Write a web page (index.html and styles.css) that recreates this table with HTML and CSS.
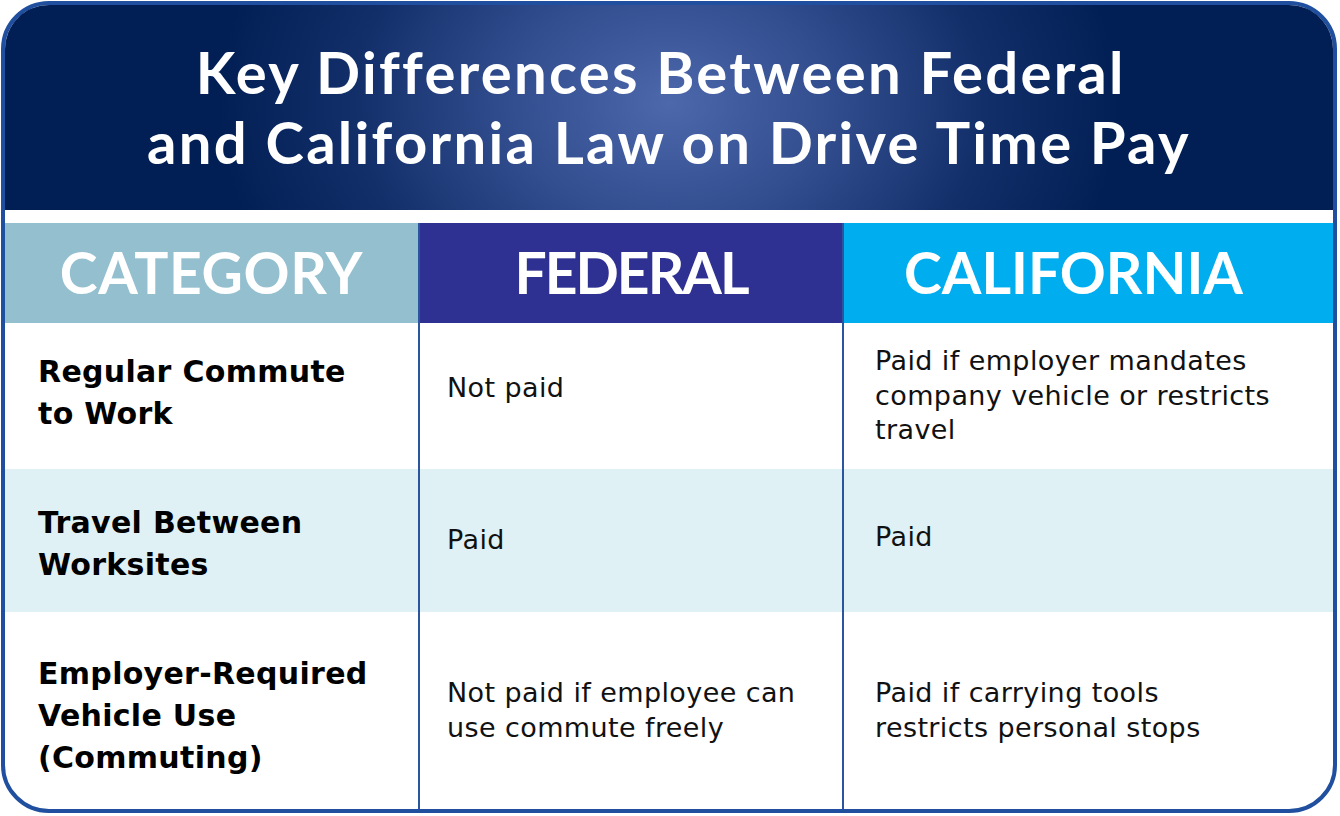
FILE: index.html
```html
<!DOCTYPE html>
<html lang="en">
<head>
<meta charset="utf-8">
<title>Key Differences Between Federal and California Law on Drive Time Pay</title>
<link rel="stylesheet" href="styles.css">
</head>
<body>
<div class="card">
  <header class="hero">
    <h1 class="title">Key Differences Between Federal&nbsp;<br>and California Law on Drive Time Pay</h1>
  </header>
  <div class="grid">
    <div class="cell head head-cat">CATEGORY</div>
    <div class="cell head head-fed">FEDERAL</div>
    <div class="cell head head-ca">CALIFORNIA</div>

    <div class="cell cat lift">Regular Commute<br>to Work</div>
    <div class="cell fed lift-more">Not paid</div>
    <div class="cell ca">Paid if employer mandates<br>company vehicle or restricts<br>travel</div>

    <div class="cell cat alt drop">Travel Between<br>Worksites</div>
    <div class="cell fed alt">Paid</div>
    <div class="cell ca alt lift">Paid</div>

    <div class="cell cat drop-more">Employer-Required<br>Vehicle Use<br>(Commuting)</div>
    <div class="cell fed">Not paid if employee can<br>use commute freely</div>
    <div class="cell ca">Paid if carrying tools<br>restricts personal stops</div>
  </div>
</div>
</body>
</html>
```
FILE: styles.css
```css
* { box-sizing: border-box; }

html, body {
  margin: 0;
  padding: 0;
  background: #ffffff;
}

.card {
  margin: 1px 0 0 1px;
  width: 1336px;
  height: 812px;
  border: 4px solid #1f4f9e;
  border-radius: 48px;
  overflow: hidden;
  background: #ffffff;
  display: flex;
  flex-direction: column;
}

.hero {
  height: 205px;
  flex: none;
  display: flex;
  align-items: center;
  justify-content: center;
  padding-bottom: 2px;
  background: radial-gradient(ellipse 450px 340px at 50% 48%, #4d68ab 0%, #324e8f 35%, #132f6a 70%, #021f55 100%);
}

.title {
  margin: 0;
  color: #ffffff;
  font-family: Lato, "DejaVu Sans", sans-serif;
  font-weight: 700;
  font-size: 58px;
  line-height: 70px;
  letter-spacing: 2.3px;
  text-align: center;
}

.grid {
  margin-top: 13px;
  flex: 1;
  display: grid;
  grid-template-columns: 413px 424px 491px;
  grid-template-rows: 100px 146px 143px 197px;
}

.cell {
  display: flex;
  align-items: center;
}

.cell.fed,
.cell.ca,
.head-fed,
.head-ca {
  border-left: 2px solid #2b559f;
}

.head {
  justify-content: center;
  color: #ffffff;
  font-family: Lato, "DejaVu Sans", sans-serif;
  font-weight: 700;
  font-size: 57px;
  line-height: 1;
  padding-bottom: 2px;
}

.head-cat { background: #94bfcf; letter-spacing: 0.6px; }
.head-fed { background: #2e3192; letter-spacing: -2px; }
.head-ca  { background: #00aeef; padding-right: 30px; }

.cat {
  padding-left: 33px;
  font-family: "DejaVu Sans", sans-serif;
  font-weight: 700;
  font-size: 30px;
  line-height: 42px;
  letter-spacing: 0.3px;
  color: #000000;
}

.fed,
.ca {
  font-family: "DejaVu Sans", sans-serif;
  font-weight: 400;
  font-size: 27px;
  line-height: 34.5px;
  letter-spacing: 0.4px;
  color: #111111;
}

.fed { padding-left: 27px; }
.ca  { padding-left: 31px; }

.alt { background: #e0f1f6; }

.lift { padding-bottom: 6px; }
.lift-more { padding-bottom: 16px; }
.drop { padding-top: 7px; }
.drop-more { padding-top: 11px; }
```
